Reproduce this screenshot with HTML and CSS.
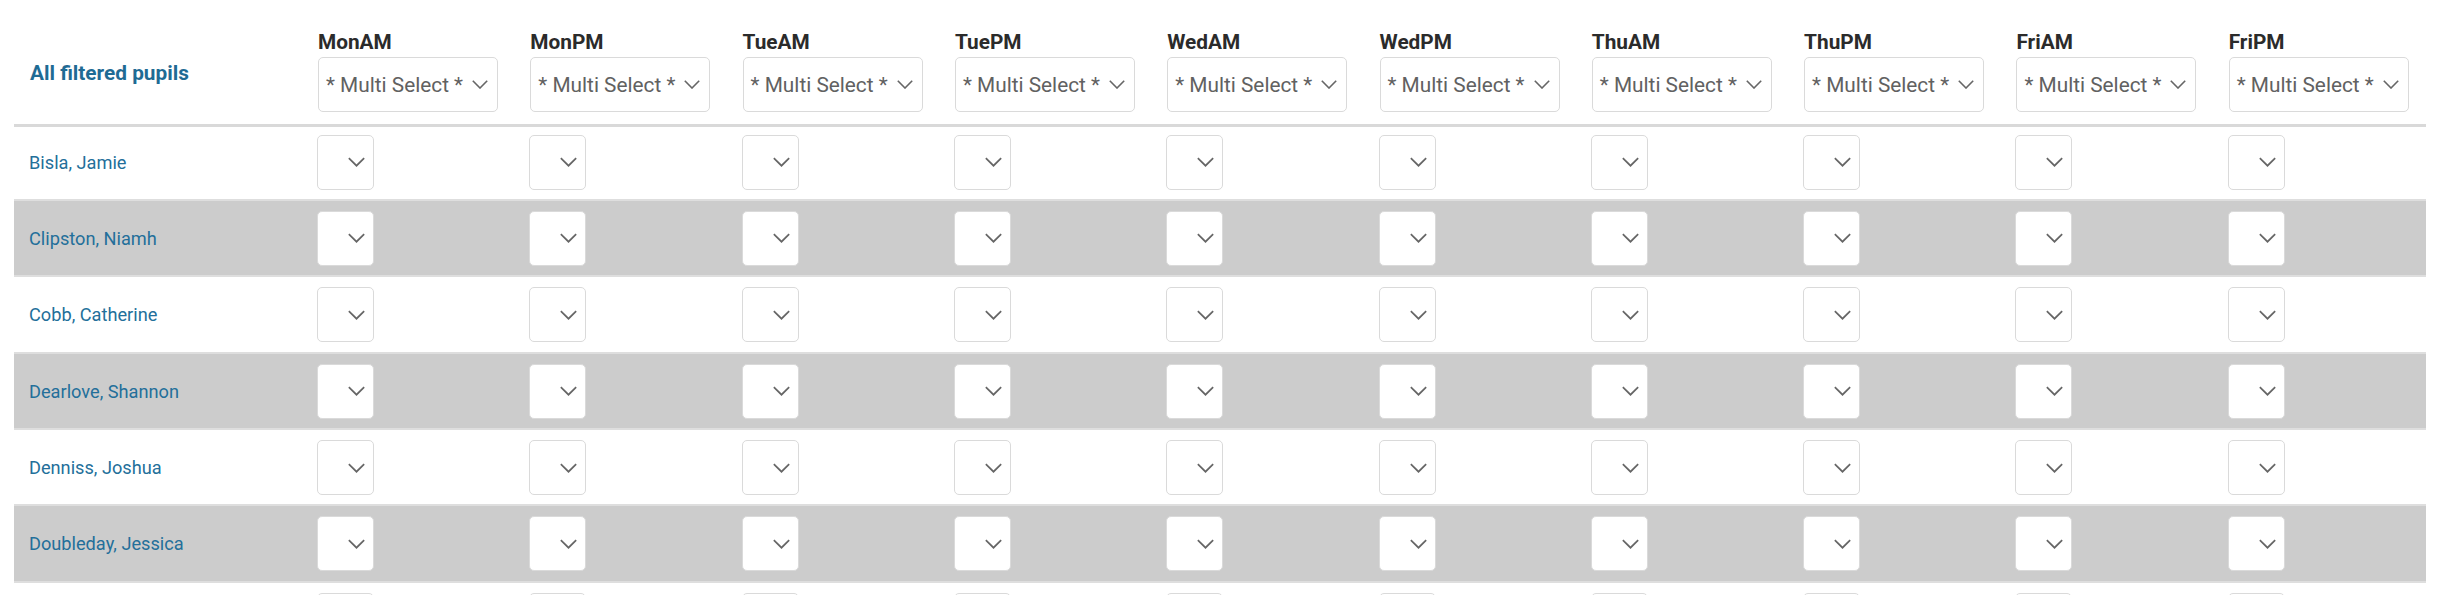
FILE: index.html
```html
<!DOCTYPE html>
<html lang="en">
<head>
<meta charset="UTF-8">
<meta name="viewport" content="width=device-width, initial-scale=1.0">
<title>Session Register</title>
<link rel="stylesheet" href="styles.css">
</head>
<body>

<div id="register">
  <div class="row head">
    <div class="label-cell"><a class="all-link">All filtered pupils</a></div>
  </div>
</div>

<script>
  const register = document.getElementById('register');
  const head = register.querySelector('.head');
  const sessions = ['MonAM', 'MonPM', 'TueAM', 'TuePM', 'WedAM', 'WedPM', 'ThuAM', 'ThuPM', 'FriAM', 'FriPM'];
  // last row only peeks in at the bottom, its name is below the fold
  const pupils = ['Bisla, Jamie', 'Clipston, Niamh', 'Cobb, Catherine', 'Dearlove, Shannon',
    'Denniss, Joshua', 'Doubleday, Jessica', ''];

  const chevron = '<svg class="chev" viewBox="0 0 16 9" width="16" height="9"><polyline points="0.8,0.8 8,8 15.2,0.8" fill="none" stroke="#666" stroke-width="1.6"/></svg>';

  sessions.forEach(name => {
    const cell = document.createElement('div');
    cell.className = 'session-cell';
    cell.innerHTML = '<div class="session-name">' + name + '</div>' +
      '<div class="picker wide"><span>* Multi Select *</span>' + chevron + '</div>';
    head.appendChild(cell);
  });

  pupils.forEach(name => {
    const row = document.createElement('div');
    row.className = 'row pupil';
    let html = '<div class="name-cell"><a class="pupil-link">' + name + '</a></div>';
    sessions.forEach(() => {
      html += '<div class="mark-cell"><div class="picker small">' + chevron + '</div></div>';
    });
    row.innerHTML = html;
    register.appendChild(row);
  });
</script>

</body>
</html>
```

FILE: styles.css
```css
html, body {
  margin: 0;
  padding: 0;
  overflow: hidden;
  background: #fff;
  font-family: Roboto, "Liberation Sans", sans-serif;
}

#register {
  margin-left: 14px;
  width: 2412px;
}

.row {
  display: grid;
  grid-template-columns: 289px repeat(10, 1fr);
}

.head {
  border-bottom: 3px solid #d9d9d9;
  padding: 30px 0 12px;
}

.label-cell {
  align-self: center;
  padding-left: 16px;
  padding-top: 4px;
}

.all-link {
  color: #1f6b94;
  font-weight: bold;
  font-size: 20.8px;
  line-height: 24px;
}

.session-cell {
  padding-left: 15px;
}

.session-name {
  color: #2b2b2b;
  font-weight: bold;
  font-size: 20.8px;
  line-height: 24px;
  margin-bottom: 3px;
}

.picker {
  box-sizing: border-box;
  height: 55px;
  border: 1px solid #dadada;
  border-radius: 5px;
  background: #fff;
  display: flex;
  align-items: center;
}

.picker.wide {
  width: 180px;
  justify-content: space-between;
  padding: 0 9px 0 7px;
  color: #616161;
  font-size: 20.8px;
}

.picker.small {
  width: 57px;
  justify-content: flex-end;
  padding-right: 8px;
}

.picker.small .chev {
  width: 17px;
  height: 10px;
}

.pupil {
  border-top: 2px solid #dedede;
  padding: 10px 0 9.4px;
  align-items: center;
}

.head + .pupil {
  border-top: none;
  padding-top: 7.5px;
}

.pupil:nth-child(odd) {
  background-color: #cccccc;
}

.name-cell {
  padding-left: 15px;
}

.pupil-link {
  color: #236f9a;
  font-size: 18.2px;
}

.mark-cell {
  padding-left: 14px;
}
```
